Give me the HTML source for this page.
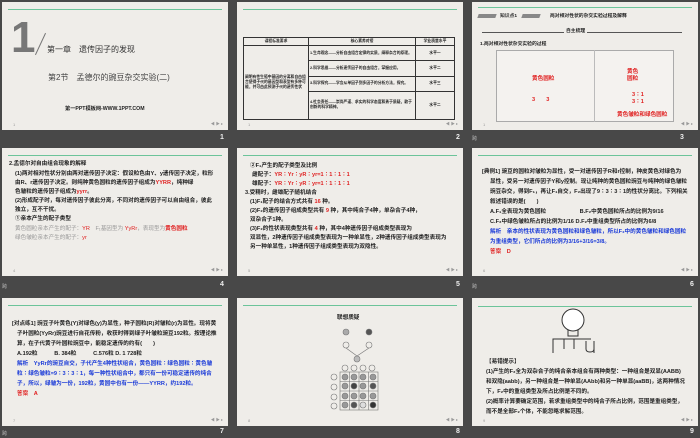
<!DOCTYPE html><html><head><meta charset="utf-8"><style>
body{margin:0;width:700px;height:438px;background:#484848;position:relative;overflow:hidden;font-family:"Liberation Sans","Noto Sans CJK SC",sans-serif}
.s{position:absolute;width:226px;height:128px;background:#efede9;overflow:hidden}
.s .g{position:absolute;left:6px;right:6px;top:7px;height:1px;background:#6cc49a}
.s .nav{position:absolute;right:5px;bottom:3px;font-size:4px;color:#999}
.s .pn{position:absolute;left:11px;bottom:3px;font-size:4px;color:#999}
.n{position:absolute;color:#eee;font-size:7px;font-weight:bold}
.t{position:absolute;font-size:5.6px;line-height:9px;color:#222;font-weight:bold;white-space:nowrap}
.r{color:#e02020}.b{color:#1a3ad8}
table{border-collapse:collapse;position:absolute;font-size:3.8px;color:#222;font-weight:bold}
td{border:0.8px solid #333;padding:0 1px}
</style></head><body>
<!-- slide 1 -->
<div class="s" style="left:2px;top:2px"><div class="g"></div>
<div style="position:absolute;left:9px;top:14px;font-size:44px;font-weight:bold;color:#777;line-height:44px">1</div>
<div style="position:absolute;left:38px;top:30px;width:1px;height:24px;background:#777;transform:rotate(25deg)"></div>
<div style="position:absolute;left:45px;top:42px;font-size:8px;color:#333">第一章　遗传因子的发现</div>
<div style="position:absolute;left:46px;top:70px;font-size:8px;color:#444">第2节　孟德尔的豌豆杂交实验(二)</div>
<div style="position:absolute;left:63px;top:103px;font-size:5.2px;font-weight:bold;color:#222">第一PPT模板网-WWW.1PPT.COM</div>
<div class="pn">1</div><div class="nav">◀ ▶ ▸</div></div>
<div class="n" style="left:220px;top:134px">1</div>
<!-- slide 2 -->
<div class="s" style="left:237px;top:2px"><div class="g"></div>
<table style="left:6px;top:35px;width:212px;height:83px"><tr style="height:8px"><td style="width:62px;text-align:center">课程标准要求</td><td style="text-align:center">核心素养对接</td><td style="width:36px;text-align:center">学业质量水平</td></tr>
<tr><td rowspan="4">阐明有性生殖中基因的分离和自由组合使得子代的基因型和表型有多种可能，并可由此预测子代的遗传性状</td><td>1.生命观念——分析自由组合定律的实质，阐释杂合的原理。</td><td style="text-align:center">水平一</td></tr>
<tr><td>2.科学思维——分析遗传因子的自由组合，掌握应用。</td><td style="text-align:center">水平二</td></tr>
<tr><td>3.科学探究——学会从单因子到多因子的分析方法，探究。</td><td style="text-align:center">水平三</td></tr>
<tr><td>4.社会责任——崇尚严谨、求实的科学态度和勇于质疑，敢于创新的科学精神。</td><td style="text-align:center">水平二</td></tr></table>
<div class="pn">1</div><div class="nav">◀ ▶ ▸</div></div>
<div class="n" style="left:456px;top:134px">2</div>
<!-- slide 3 -->
<div class="s" style="left:472px;top:2px"><div class="g" style="top:5px"></div>
<div style="position:absolute;left:6px;top:12px;width:18px;height:4px;background:#888;transform:skewX(-20deg)"></div>
<div style="position:absolute;left:50px;top:12px;width:18px;height:4px;background:#888;transform:skewX(-20deg)"></div>
<div class="t" style="left:28px;top:10px;font-size:4.8px">知识点1</div>
<div class="t" style="left:78px;top:10px;font-size:4.8px">两对相对性状的杂交实验过程及解释</div>
<div style="position:absolute;left:10px;top:30px;width:200px;height:1px;background:#555"></div>
<div class="t" style="left:92px;top:25px;font-size:4.8px;background:#efede9;padding:0 2px">自主梳理</div>
<div class="t" style="left:8px;top:38px;font-size:4.8px">1.两对相对性状杂交实验的过程</div>
<div style="position:absolute;left:24px;top:48px;width:176px;height:70px;border:1px solid #aaa;background:#f4f2ef"></div>
<div style="position:absolute;left:122px;top:48px;width:1px;height:72px;background:#bbb"></div>
<div class="t r" style="left:60px;top:73px">黄色圆粒</div>
<div class="t r" style="left:60px;top:94px">3　　3</div>
<div class="t r" style="left:155px;top:66px">黄色</div><div class="t r" style="left:155px;top:73px">圆粒</div>
<div class="t r" style="left:160px;top:89px">3∶1</div><div class="t r" style="left:160px;top:96px">3∶1</div>
<div class="t r" style="left:145px;top:109px">黄色皱粒和绿色圆粒</div>
<div class="pn">1</div><div class="nav">◀ ▶ ▸</div></div>
<div class="n" style="left:680px;top:134px">3</div>
<div style="position:absolute;left:472px;top:135px;font-size:5px;color:#bbb">跨</div>
<!-- slide 4 -->
<div class="s" style="left:2px;top:148px"><div class="g"></div>
<div class="t" style="left:7px;top:12px">2.孟德尔对自由组合现象的解释</div>
<div class="t" style="left:13px;top:22px">(1)两对相对性状分别由两对遗传因子决定：假设粒色由Y、y遗传因子决定，粒形</div>
<div class="t" style="left:13px;top:31px">由R、r遗传因子决定。则纯种黄色圆粒的遗传因子组成为<span class="r">YYRR</span>，纯种绿</div>
<div class="t" style="left:13px;top:40px">色皱粒的遗传因子组成为<span class="r">yyrr</span>。</div>
<div class="t" style="left:13px;top:49px">(2)形成配子时，每对遗传因子彼此分离，不同对的遗传因子可以自由组合，彼此</div>
<div class="t" style="left:13px;top:58px">独立，互不干扰。</div>
<div class="t" style="left:13px;top:67px">①亲本产生的配子类型</div>
<div class="t" style="left:13px;top:77px;color:#999;font-weight:normal">黄色圆粒亲本产生的配子：<span class="r">YR</span>　F₁基因型为 <span class="r">YyRr</span>，表现型为<span class="r" style="font-weight:bold">黄色圆粒</span></div>
<div class="t" style="left:13px;top:86px;color:#999;font-weight:normal">绿色皱粒亲本产生的配子：<span class="r">yr</span></div>
<div class="pn">4</div><div class="nav">◀ ▶ ▸</div></div>
<div class="n" style="left:220px;top:281px">4</div>
<div style="position:absolute;left:2px;top:283px;font-size:5px;color:#bbb">跨</div>
<!-- slide 5 -->
<div class="s" style="left:237px;top:148px"><div class="g"></div>
<div class="t" style="left:13px;top:14px">②F₁产生的配子类型及比例</div>
<div class="t" style="left:15px;top:23px">雌配子：<span class="r">YR∶Yr∶yR∶yr=1∶1∶1∶1</span></div>
<div class="t" style="left:15px;top:32px">雄配子：<span class="r">YR∶Yr∶yR∶yr=1∶1∶1∶1</span></div>
<div class="t" style="left:8px;top:41px">3.受精时，雌雄配子随机结合</div>
<div class="t" style="left:13px;top:50px">(1)F₁配子的结合方式共有<span class="r"> 16 </span>种。</div>
<div class="t" style="left:13px;top:59px">(2)F₂的遗传因子组成类型共有<span class="r"> 9 </span>种，其中纯合子4种，单杂合子4种，</div>
<div class="t" style="left:13px;top:68px">双杂合子1种。</div>
<div class="t" style="left:13px;top:77px">(3)F₂的性状表现类型共有<span class="r"> 4 </span>种，其中4种遗传因子组成类型表现为</div>
<div class="t" style="left:13px;top:86px">双显性，2种遗传因子组成类型表现为一种单显性，2种遗传因子组成类型表现为</div>
<div class="t" style="left:13px;top:95px">另一种单显性，1种遗传因子组成类型表现为双隐性。</div>
<div class="pn">5</div><div class="nav">◀ ▶ ▸</div></div>
<div class="n" style="left:456px;top:281px">5</div>
<!-- slide 6 -->
<div class="s" style="left:472px;top:148px"><div class="g"></div>
<div class="t" style="left:10px;top:20px">[典例1] 豌豆的圆粒对皱粒为显性，受一对遗传因子R和r控制，种皮黄色对绿色为</div>
<div class="t" style="left:18px;top:30px">显性，受另一对遗传因子Y和y控制。现让纯种的黄色圆粒豌豆与纯种的绿色皱粒</div>
<div class="t" style="left:18px;top:40px">豌豆杂交，得到F₁，再让F₁自交，F₂出现了9∶3∶3∶1的性状分离比。下列相关</div>
<div class="t" style="left:18px;top:50px">叙述错误的是(　　)</div>
<div class="t" style="left:18px;top:60px">A.F₁全表现为黄色圆粒　　　　　　B.F₂中黄色圆粒所占的比例为9/16</div>
<div class="t" style="left:18px;top:70px">C.F₂中绿色皱粒所占的比例为1/16 D.F₂中重组类型所占的比例为6/8</div>
<div class="t b" style="left:18px;top:80px">解析　亲本的性状表现为黄色圆粒和绿色皱粒，所以F₂中的黄色皱粒和绿色圆粒</div>
<div class="t b" style="left:18px;top:90px">为重组类型，它们所占的比例为3/16+3/16=3/8。</div>
<div class="t r" style="left:18px;top:100px">答案　D</div>
<div class="pn">6</div><div class="nav">◀ ▶ ▸</div></div>
<div class="n" style="left:690px;top:281px">6</div>
<div style="position:absolute;left:472px;top:283px;font-size:5px;color:#bbb">跨</div>
<!-- slide 7 -->
<div class="s" style="left:2px;top:298px"><div class="g"></div>
<div class="t" style="left:10px;top:22px">[对点练1] 豌豆子叶黄色(Y)对绿色(y)为显性，种子圆粒(R)对皱粒(r)为显性。现将黄</div>
<div class="t" style="left:15px;top:32px">子叶圆粒(YyRr)豌豆进行自花传粉，收获时得到绿子叶皱粒豌豆192粒。按理论推</div>
<div class="t" style="left:15px;top:42px">算，在子代黄子叶圆粒豌豆中，能稳定遗传的约有(　　)</div>
<div class="t" style="left:15px;top:52px">A.192粒　　　B. 384粒　　　C.576粒 D. 1 728粒</div>
<div class="t b" style="left:15px;top:62px">解析　YyRr的豌豆自交，子代产生4种性状组合，黄色圆粒∶绿色圆粒∶黄色皱</div>
<div class="t b" style="left:15px;top:72px">粒∶绿色皱粒=9∶3∶3∶1，每一种性状组合中，都只有一份可稳定遗传的纯合</div>
<div class="t b" style="left:15px;top:82px">子，所以，绿皱为一份，192粒，黄圆中也有一份——YYRR，约192粒。</div>
<div class="t r" style="left:15px;top:92px">答案　A</div>
<div class="pn">7</div><div class="nav">◀ ▶ ▸</div></div>
<div class="n" style="left:220px;top:428px">7</div>
<div style="position:absolute;left:2px;top:430px;font-size:5px;color:#bbb">跨</div>
<!-- slide 8 -->
<div class="s" style="left:237px;top:298px"><div class="g"></div>
<div class="t" style="left:100px;top:16px">联想质疑</div>
<svg style="position:absolute;left:80px;top:28px" width="70" height="85" viewBox="0 0 70 85" fill="none" stroke="#777" stroke-width="0.6">
<circle cx="29" cy="6" r="3" fill="#aaa"/><circle cx="52" cy="6" r="3" fill="#555"/>
<circle cx="29" cy="19" r="3"/><circle cx="52" cy="19" r="3"/><path d="M29 22 L40 30 L52 22"/>
<circle cx="40" cy="33" r="3" fill="#bbb"/>
<circle cx="28" cy="42" r="3"/><circle cx="37" cy="42" r="3"/><circle cx="46" cy="42" r="3"/><circle cx="55" cy="42" r="3"/>
<circle cx="17" cy="51" r="3"/><circle cx="17" cy="61" r="3"/><circle cx="17" cy="71" r="3"/><circle cx="17" cy="80" r="3"/>
<rect x="23" y="46" width="38" height="38"/><path d="M32.5 46V84M42 46V84M51.5 46V84M23 55.5H61M23 65H61M23 74.5H61"/>
<g fill="#999"><circle cx="28" cy="51" r="3"/><circle cx="37" cy="51" r="3"/><circle cx="46" cy="51" r="3"/><circle cx="56" cy="51" r="3"/><circle cx="28" cy="60" r="3"/><circle cx="37" cy="60" r="3" fill="#444"/><circle cx="46" cy="60" r="3"/><circle cx="56" cy="60" r="3" fill="#555"/><circle cx="28" cy="70" r="3"/><circle cx="37" cy="70" r="3"/><circle cx="46" cy="70" r="3"/><circle cx="56" cy="70" r="3"/><circle cx="28" cy="79" r="3"/><circle cx="37" cy="79" r="3" fill="#555"/><circle cx="46" cy="79" r="3" fill="#ddd"/><circle cx="56" cy="79" r="3" fill="#333"/></g>
</svg>
<div class="pn">8</div><div class="nav">◀ ▶ ▸</div></div>
<div class="n" style="left:456px;top:428px">8</div>
<!-- slide 9 -->
<div class="s" style="left:472px;top:298px"><div class="g" style="top:8px"></div>
<svg style="position:absolute;left:78px;top:8px" width="50" height="48" viewBox="0 0 50 48" fill="none" stroke="#333" stroke-width="1">
<circle cx="23" cy="14" r="11" fill="#fff"/><path d="M18 24v6h10v-6"/><path d="M3 47V33h38M3 33h2"/><path d="M14 33v10M24 33v10"/><path d="M36 35v8q0 3 4 3t4-3v-8M44 35v12"/></svg>
<div class="t" style="left:14px;top:60px">【易错提示】</div>
<div class="t" style="left:14px;top:70px">(1)产生的F₂全为双杂合子的纯合亲本组合有两种类型：一种组合是双显(AABB)</div>
<div class="t" style="left:14px;top:80px">和双隐(aabb)，另一种组合是一种单显(AAbb)和另一种单显(aaBB)，这两种情况</div>
<div class="t" style="left:14px;top:90px">下，F₂中的重组类型及所占比例是不同的。</div>
<div class="t" style="left:14px;top:100px">(2)概率计算要确定范围，若求重组类型中的纯合子所占比例，范围是重组类型，</div>
<div class="t" style="left:14px;top:110px">而不是全部F₂个体，不能忽略求解范围。</div>
<div class="pn">9</div><div class="nav">◀ ▶ ▸</div></div>
<div class="n" style="left:690px;top:428px">9</div>
</body></html>
